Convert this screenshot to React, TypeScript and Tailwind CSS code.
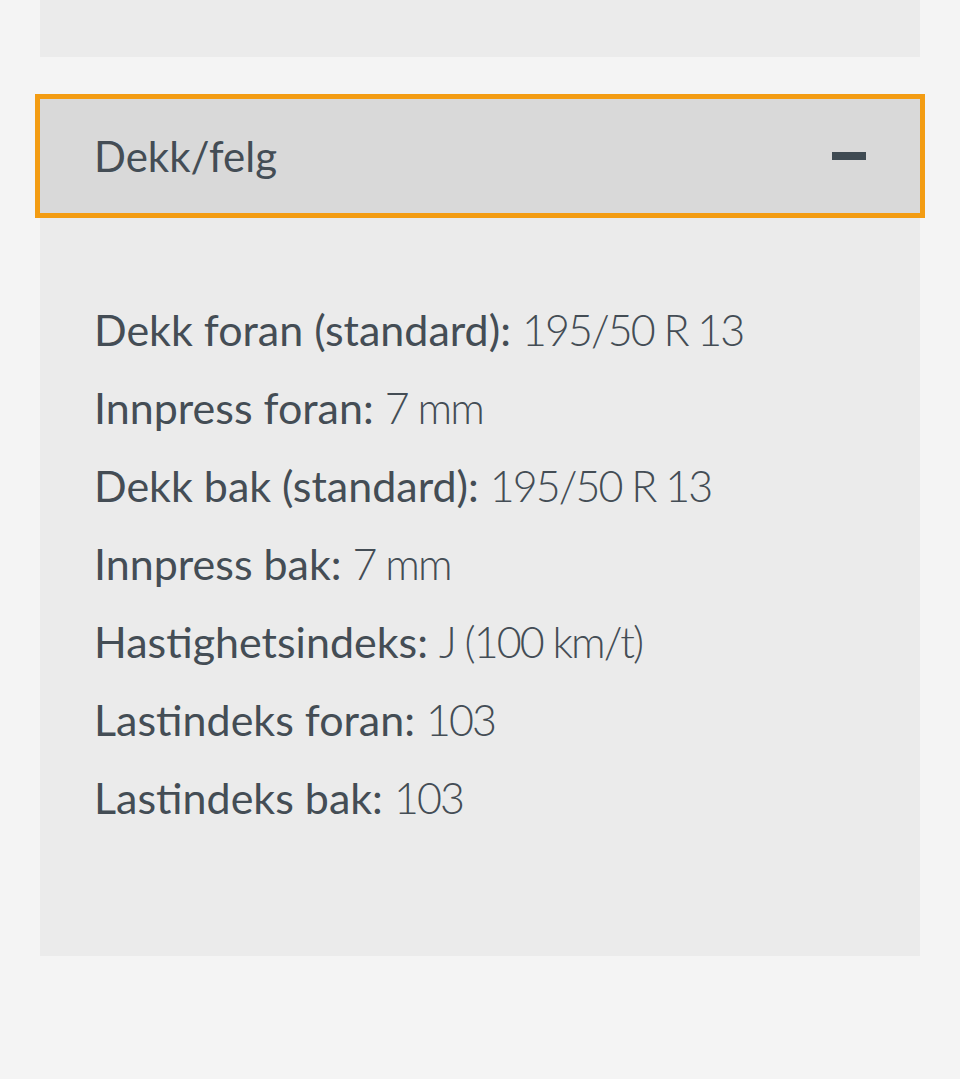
import React from 'react';

const specs = [
  { label: 'Dekk foran (standard):', value: '195/50 R 13' },
  { label: 'Innpress foran:', value: '7 mm' },
  { label: 'Dekk bak (standard):', value: '195/50 R 13' },
  { label: 'Innpress bak:', value: '7 mm' },
  { label: 'Hastighetsindeks:', value: 'J (100 km/t)' },
  { label: 'Lastindeks foran:', value: '103' },
  { label: 'Lastindeks bak:', value: '103' },
];

export default function App() {
  return (
    <div
      className="min-h-screen bg-[#f4f4f4] px-[40px] text-[#444d55]"
      style={{ fontFamily: 'Lato, "Open Sans", sans-serif' }}
    >
      {/* previous section (collapsed) */}
      <div className="h-[57px] bg-[#ebebeb]" />

      <div className="mt-[37px]">
        <button className="-mx-[5px] flex h-[124px] w-[calc(100%+10px)] items-center justify-between border-[5px] border-[#f39c12] bg-[#d9d9d9] px-[54px] text-left">
          <span className="text-[42px] leading-none">Dekk/felg</span>
          <span className="block h-[8px] w-[34px] bg-[#3f4a52]" />
        </button>

        <div className="h-[738px] bg-[#ebebeb] px-[54px] pt-[73px]">
          {specs.map((s) => (
            <div key={s.label} className="h-[78px] text-[43px] leading-[78px] whitespace-nowrap">
              <span className="font-normal">{s.label}</span>{' '}
              <span className="font-light tracking-[-0.045em]">{s.value}</span>
            </div>
          ))}
        </div>
      </div>
    </div>
  );
}
